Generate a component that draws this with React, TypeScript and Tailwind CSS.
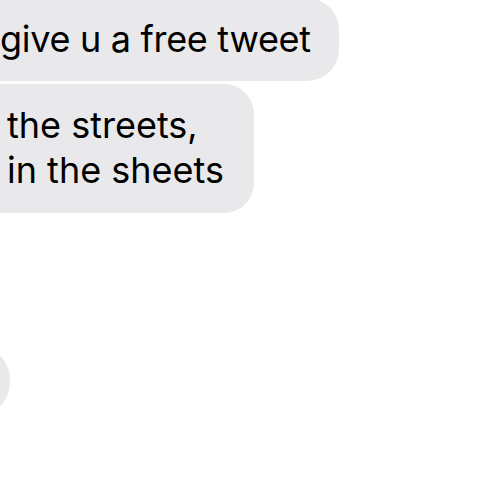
export default function App() {
  return (
    <div
      className="w-[500px] h-[500px] bg-white overflow-hidden flex flex-col items-start text-black"
      style={{ fontFamily: "Inter, 'Noto Sans', sans-serif" }}
    >
      <div className="-mt-[2px] -ml-[40px] bg-[#e9e9eb] rounded-[32px] pl-[40px] pr-[28px] py-[19px] text-[36px] leading-[45px] tracking-[-0.3px] whitespace-nowrap">
        give u a free tweet
      </div>
      <div className="mt-[3px] -ml-[40px] bg-[#e9e9eb] rounded-[30px] pl-[47px] pr-[30px] pt-[19px] pb-[20px] text-[36px] leading-[45px] whitespace-nowrap">
        <div>the streets,</div>
        <div>in the sheets</div>
      </div>
      <div className="mt-[132px] -ml-[60px] w-[70px] h-[72px] bg-[#e9e9eb] rounded-[36px]" />
    </div>
  );
}
